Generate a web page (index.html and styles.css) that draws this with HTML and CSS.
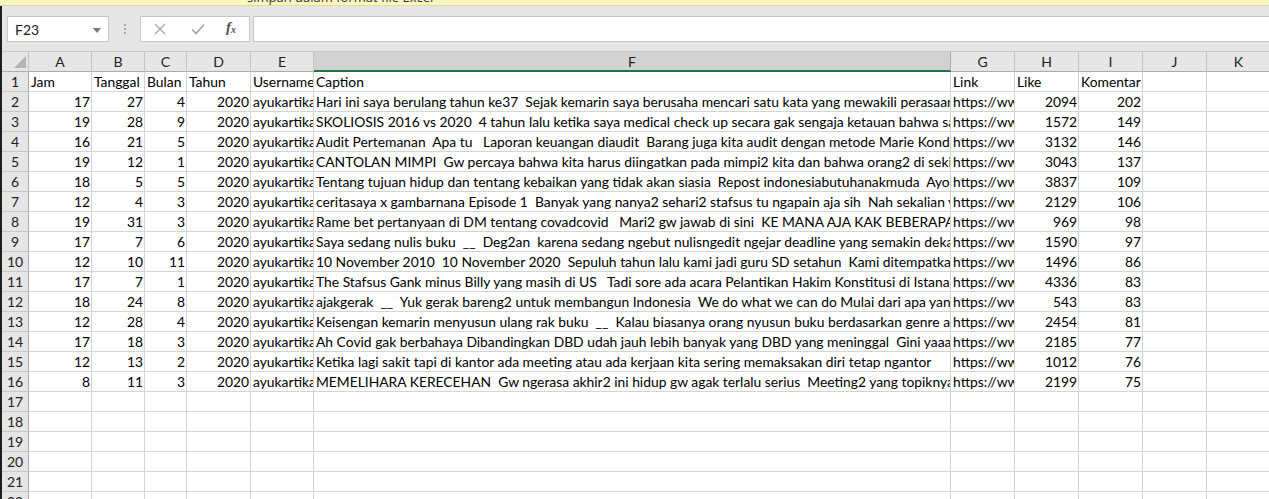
FILE: index.html
```html
<!DOCTYPE html>
<html lang="id">
<head>
<meta charset="utf-8">
<title>Excel sheet</title>
<link rel="stylesheet" href="styles.css">
</head>
<body>
<div class="infobar"><span class="infotext">simpan dalam format file Excel</span></div>
<div class="main">
  <div class="strip"></div>
  <div class="content">
    <div class="toolbar">
      <div class="namebox"><span>F23</span><svg class="dd" width="8" height="5" viewBox="0 0 8 5"><path d="M0 0H8L4 5Z" fill="#7a7a7a"/></svg></div>
      <div class="dots"><i></i><i></i><i></i></div>
      <div class="fxgroup">
        <svg class="ic" width="12" height="12" viewBox="0 0 12 12"><path d="M1 1L11 11M11 1L1 11" stroke="#a6a6a6" stroke-width="1.4" fill="none"/></svg>
        <svg class="ic" width="14" height="12" viewBox="0 0 14 12"><path d="M1 6.5L5 10.5L13 1.5" stroke="#a6a6a6" stroke-width="1.6" fill="none"/></svg>
        <span class="fx"><i>f</i><sub>x</sub></span>
      </div>
      <div class="formula"></div>
    </div>
    <div class="sheet">
      <div class="row head">
        <div class="corner"><svg width="12" height="12" viewBox="0 0 12 12"><path d="M12 0V12H0Z" fill="#b4b4b4"/></svg></div>
        <div class="ch">A</div><div class="ch">B</div><div class="ch">C</div><div class="ch">D</div><div class="ch">E</div><div class="ch sel">F</div><div class="ch">G</div><div class="ch">H</div><div class="ch">I</div><div class="ch">J</div><div class="ch">K</div>
      </div>
      <div class="row"><div class="rh">1</div><div class="c">Jam</div><div class="c">Tanggal</div><div class="c">Bulan</div><div class="c">Tahun</div><div class="c">Username</div><div class="c">Caption</div><div class="c">Link</div><div class="c">Like</div><div class="c">Komentar</div><div class="c"></div><div class="c"></div></div>
      <div class="row"><div class="rh">2</div><div class="c n">17</div><div class="c n">27</div><div class="c n">4</div><div class="c n">2020</div><div class="c">ayukartika</div><div class="c">Hari ini saya berulang tahun ke37  Sejak kemarin saya berusaha mencari satu kata yang mewakili perasaan saya</div><div class="c">https://www</div><div class="c n">2094</div><div class="c n">202</div><div class="c"></div><div class="c"></div></div>
      <div class="row"><div class="rh">3</div><div class="c n">19</div><div class="c n">28</div><div class="c n">9</div><div class="c n">2020</div><div class="c">ayukartika</div><div class="c">SKOLIOSIS 2016 vs 2020  4 tahun lalu ketika saya medical check up secara gak sengaja ketauan bahwa saya skoliosis</div><div class="c">https://www</div><div class="c n">1572</div><div class="c n">149</div><div class="c"></div><div class="c"></div></div>
      <div class="row"><div class="rh">4</div><div class="c n">16</div><div class="c n">21</div><div class="c n">5</div><div class="c n">2020</div><div class="c">ayukartika</div><div class="c">Audit Pertemanan  Apa tu   Laporan keuangan diaudit  Barang juga kita audit dengan metode Marie Kondo  Nah</div><div class="c">https://www</div><div class="c n">3132</div><div class="c n">146</div><div class="c"></div><div class="c"></div></div>
      <div class="row"><div class="rh">5</div><div class="c n">19</div><div class="c n">12</div><div class="c n">1</div><div class="c n">2020</div><div class="c">ayukartika</div><div class="c">CANTOLAN MIMPI  Gw percaya bahwa kita harus diingatkan pada mimpi2 kita dan bahwa orang2 di sekitar kita</div><div class="c">https://www</div><div class="c n">3043</div><div class="c n">137</div><div class="c"></div><div class="c"></div></div>
      <div class="row"><div class="rh">6</div><div class="c n">18</div><div class="c n">5</div><div class="c n">5</div><div class="c n">2020</div><div class="c">ayukartika</div><div class="c">Tentang tujuan hidup dan tentang kebaikan yang tidak akan siasia  Repost indonesiabutuhanakmuda  Ayo gerak</div><div class="c">https://www</div><div class="c n">3837</div><div class="c n">109</div><div class="c"></div><div class="c"></div></div>
      <div class="row"><div class="rh">7</div><div class="c n">12</div><div class="c n">4</div><div class="c n">3</div><div class="c n">2020</div><div class="c">ayukartika</div><div class="c">ceritasaya x gambarnana Episode 1  Banyak yang nanya2 sehari2 stafsus tu ngapain aja sih  Nah sekalian ya</div><div class="c">https://www</div><div class="c n">2129</div><div class="c n">106</div><div class="c"></div><div class="c"></div></div>
      <div class="row"><div class="rh">8</div><div class="c n">19</div><div class="c n">31</div><div class="c n">3</div><div class="c n">2020</div><div class="c">ayukartika</div><div class="c">Rame bet pertanyaan di DM tentang covadcovid   Mari2 gw jawab di sini  KE MANA AJA KAK BEBERAPA HARI INI</div><div class="c">https://www</div><div class="c n">969</div><div class="c n">98</div><div class="c"></div><div class="c"></div></div>
      <div class="row"><div class="rh">9</div><div class="c n">17</div><div class="c n">7</div><div class="c n">6</div><div class="c n">2020</div><div class="c">ayukartika</div><div class="c">Saya sedang nulis buku  __  Deg2an  karena sedang ngebut nulisngedit ngejar deadline yang semakin dekat  </div><div class="c">https://www</div><div class="c n">1590</div><div class="c n">97</div><div class="c"></div><div class="c"></div></div>
      <div class="row"><div class="rh">10</div><div class="c n">12</div><div class="c n">10</div><div class="c n">11</div><div class="c n">2020</div><div class="c">ayukartika</div><div class="c">10 November 2010  10 November 2020  Sepuluh tahun lalu kami jadi guru SD setahun  Kami ditempatkan di</div><div class="c">https://www</div><div class="c n">1496</div><div class="c n">86</div><div class="c"></div><div class="c"></div></div>
      <div class="row"><div class="rh">11</div><div class="c n">17</div><div class="c n">7</div><div class="c n">1</div><div class="c n">2020</div><div class="c">ayukartika</div><div class="c">The Stafsus Gank minus Billy yang masih di US   Tadi sore ada acara Pelantikan Hakim Konstitusi di Istana Negara</div><div class="c">https://www</div><div class="c n">4336</div><div class="c n">83</div><div class="c"></div><div class="c"></div></div>
      <div class="row"><div class="rh">12</div><div class="c n">18</div><div class="c n">24</div><div class="c n">8</div><div class="c n">2020</div><div class="c">ayukartika</div><div class="c">ajakgerak  __  Yuk gerak bareng2 untuk membangun Indonesia  We do what we can do Mulai dari apa yang ada</div><div class="c">https://www</div><div class="c n">543</div><div class="c n">83</div><div class="c"></div><div class="c"></div></div>
      <div class="row"><div class="rh">13</div><div class="c n">12</div><div class="c n">28</div><div class="c n">4</div><div class="c n">2020</div><div class="c">ayukartika</div><div class="c">Keisengan kemarin menyusun ulang rak buku  __  Kalau biasanya orang nyusun buku berdasarkan genre atau</div><div class="c">https://www</div><div class="c n">2454</div><div class="c n">81</div><div class="c"></div><div class="c"></div></div>
      <div class="row"><div class="rh">14</div><div class="c n">17</div><div class="c n">18</div><div class="c n">3</div><div class="c n">2020</div><div class="c">ayukartika</div><div class="c">Ah Covid gak berbahaya Dibandingkan DBD udah jauh lebih banyak yang DBD yang meninggal  Gini yaaa...</div><div class="c">https://www</div><div class="c n">2185</div><div class="c n">77</div><div class="c"></div><div class="c"></div></div>
      <div class="row"><div class="rh">15</div><div class="c n">12</div><div class="c n">13</div><div class="c n">2</div><div class="c n">2020</div><div class="c">ayukartika</div><div class="c">Ketika lagi sakit tapi di kantor ada meeting atau ada kerjaan kita sering memaksakan diri tetap ngantor</div><div class="c">https://www</div><div class="c n">1012</div><div class="c n">76</div><div class="c"></div><div class="c"></div></div>
      <div class="row"><div class="rh">16</div><div class="c n">8</div><div class="c n">11</div><div class="c n">3</div><div class="c n">2020</div><div class="c">ayukartika</div><div class="c">MEMELIHARA KERECEHAN  Gw ngerasa akhir2 ini hidup gw agak terlalu serius  Meeting2 yang topiknya bisa</div><div class="c">https://www</div><div class="c n">2199</div><div class="c n">75</div><div class="c"></div><div class="c"></div></div>
      <div class="row"><div class="rh">17</div><div class="c"></div><div class="c"></div><div class="c"></div><div class="c"></div><div class="c"></div><div class="c"></div><div class="c"></div><div class="c"></div><div class="c"></div><div class="c"></div><div class="c"></div></div>
      <div class="row"><div class="rh">18</div><div class="c"></div><div class="c"></div><div class="c"></div><div class="c"></div><div class="c"></div><div class="c"></div><div class="c"></div><div class="c"></div><div class="c"></div><div class="c"></div><div class="c"></div></div>
      <div class="row"><div class="rh">19</div><div class="c"></div><div class="c"></div><div class="c"></div><div class="c"></div><div class="c"></div><div class="c"></div><div class="c"></div><div class="c"></div><div class="c"></div><div class="c"></div><div class="c"></div></div>
      <div class="row"><div class="rh">20</div><div class="c"></div><div class="c"></div><div class="c"></div><div class="c"></div><div class="c"></div><div class="c"></div><div class="c"></div><div class="c"></div><div class="c"></div><div class="c"></div><div class="c"></div></div>
      <div class="row"><div class="rh">21</div><div class="c"></div><div class="c"></div><div class="c"></div><div class="c"></div><div class="c"></div><div class="c"></div><div class="c"></div><div class="c"></div><div class="c"></div><div class="c"></div><div class="c"></div></div>
      <div class="row"><div class="rh">22</div><div class="c"></div><div class="c"></div><div class="c"></div><div class="c"></div><div class="c"></div><div class="c"></div><div class="c"></div><div class="c"></div><div class="c"></div><div class="c"></div><div class="c"></div></div>
    </div>
  </div>
</div>
</body>
</html>
```
FILE: styles.css
```css
* { box-sizing: border-box; }
html, body { margin: 0; padding: 0; }
body {
  width: 1269px;
  height: 499px;
  overflow: hidden;
  background: #fff;
  font-family: Lato, "Liberation Sans", sans-serif;
  color: #000;
}
.infobar {
  height: 6px;
  background: #fdf6c3;
  border-bottom: 1px solid #e8dc94;
  overflow: hidden;
  position: relative;
}
.infotext {
  position: absolute;
  left: 247px;
  top: -11px;
  font-family: "Open Sans", sans-serif;
  font-size: 13px;
  line-height: 16px;
  color: #333;
}
.main { display: flex; height: 493px; }
.strip { width: 2px; background: #1e1e1e; flex: none; }
.content { flex: 1; min-width: 0; overflow: hidden; }
.toolbar {
  height: 46px;
  background: #e6e6e6;
  border-bottom: 1px solid #c6c6c6;
  display: flex;
  align-items: flex-start;
  padding: 10px 0 0 5px;
}
.namebox {
  width: 102px;
  height: 26px;
  background: #fff;
  border: 1px solid #c6c6c6;
  display: flex;
  align-items: center;
  justify-content: space-between;
  padding: 1px 7px 0 7px;
  font-size: 14px;
  color: #222;
}
.dd { margin-top: 1px; }
.dots {
  width: 31px;
  height: 26px;
  display: flex;
  flex-direction: column;
  align-items: center;
  justify-content: center;
  gap: 2px;
}
.dots i { width: 2px; height: 2px; background: #a8a8a8; display: block; }
.fxgroup {
  width: 110px;
  height: 26px;
  background: #fff;
  border: 1px solid #c6c6c6;
  display: flex;
  align-items: center;
  padding-left: 13px;
}
.fxgroup .ic:first-child { margin-right: 25px; }
.fxgroup .ic:nth-child(2) { margin-right: 21px; }
.fx {
  font-family: "Liberation Serif", serif;
  font-size: 15px;
  font-weight: bold;
  color: #505050;
  margin-top: -3px;
}
.fx i { font-style: italic; }
.fx sub { font-size: 10px; font-style: italic; vertical-align: -1px; }
.formula {
  flex: 1;
  height: 26px;
  margin-left: 3px;
  background: #fff;
  border: 1px solid #c6c6c6;
  border-right: none;
}
.sheet { display: flex; flex-direction: column; }
.row {
  display: grid;
  grid-template-columns: 27px 63px 53px 42px 64px 63px 637px 64px 64px 64px 64px 64px;
  height: 20px;
}
.row > div {
  border-right: 1px solid #d4d4d4;
  border-bottom: 1px solid #d4d4d4;
  overflow: hidden;
  white-space: pre;
  font-size: 13.85px;
  line-height: 19px;
}
.head > div {
  background: #e6e6e6;
  border-right: 1px solid #c4c4c4;
  border-bottom: 1px solid #ababab;
  text-align: center;
  color: #222;
  font-size: 14px;
  line-height: 20px;
}
.head .corner {
  display: flex;
  align-items: flex-end;
  justify-content: flex-end;
  padding: 0 2px 3px 0;
}
.head .sel {
  background: #d2d2d2;
  border-bottom: 2px solid #217346;
  border-right-color: #ababab;
  line-height: 20px;
}
.row .rh {
  background: #e6e6e6;
  border-right: 1px solid #ababab;
  border-bottom: 1px solid #c8c8c8;
  text-align: center;
  color: #222;
  font-size: 14px;
  line-height: 20px;
}
.row .c { padding: 0 2px 0 2px; }
.row .n { text-align: right; padding: 0 1px 0 2px; }
```
